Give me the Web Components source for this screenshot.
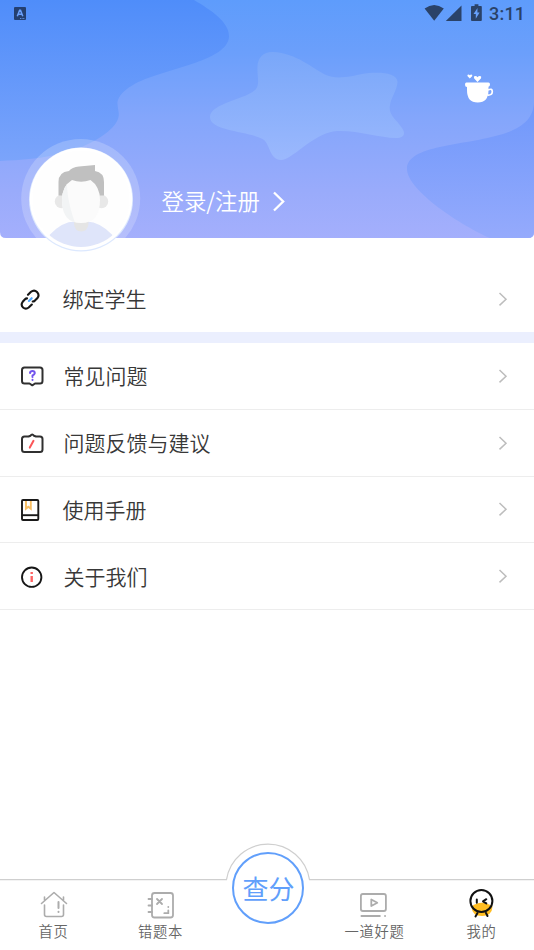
<!DOCTYPE html>
<html lang="zh-CN">
<head>
<meta charset="utf-8">
<meta name="viewport" content="width=device-width, initial-scale=1">
<title>我的</title>
<style>
  body {
    margin: 0;
    background: #fff;
    font-family: "Noto Sans CJK SC", sans-serif;
    font-weight: 350;
    overflow: hidden;
  }
</style>
</head>
<body>
<profile-page></profile-page>

<script>
class StatusBar extends HTMLElement {
  connectedCallback() {
    this.attachShadow({ mode: 'open' });
    this.shadowRoot.innerHTML = `
      <style>
        :host {
          display: flex;
          justify-content: space-between;
          height: 27px;
          color: #2a4268;
        }
        svg {
          display: block;
        }
        .right {
          display: flex;
        }
        .time {
          width: 45px;
          font: 500 18px/28px Roboto, sans-serif;
          letter-spacing: 0.2px;
        }
      </style>
      <svg width="40" height="27">
        <rect x="14" y="7" width="12" height="13" rx="1" fill="#243f70"/>
        <path d="M17.300 16.300l2.300-6h.9l2.300 6M18.300 14.200h3.600" fill="none" stroke="#6ba0fb" stroke-width="1.500"/>
        <path d="M20 18.500h5" stroke="#5f8ddf" stroke-width="1" stroke-dasharray="1 .6"/>
      </svg>
      <div class="right">
        <svg width="65" height="27" fill="currentColor">
          <path d="M.6 8.500Q10.200 1.500 19.800 8.500L10.200 20.700z"/>
          <path d="M37.500 5.500v15.500H21.800z"/>
          <path d="M48 6h2.600V4.300h3.800V6H57q.8 0 .8.800V20q0 1-.8 1h-9q-1 0-1-1V6.800Q47 6 48 6z"/>
          <path d="M53.500 8l-4 6h2.300v4.800l3.800-6.200h-2.200z" fill="#67a0fb"/>
        </svg>
        <span class="time">3:11</span>
      </div>
    `;
  }
}
customElements.define('status-bar', StatusBar);

class UserAvatar extends HTMLElement {
  connectedCallback() {
    this.attachShadow({ mode: 'open' });
    this.shadowRoot.innerHTML = `
      <style>
        :host {
          display: block;
          width: 120px;
          height: 116px;
        }
        svg {
          display: block;
          overflow: visible;
        }
      </style>
      <svg width="120" height="116" viewBox="21 138 120 116">
        <defs>
          <clipPath id="face"><circle cx="81" cy="199" r="48"/></clipPath>
          <clipPath id="half"><path d="M55 170h12.500q-3 25 8 54H55z"/></clipPath>
          <clipPath id="band"><path d="M21 135h120v103H21z"/></clipPath>
        </defs>
        <circle cx="80.700" cy="198.500" r="59.500" fill="#fff" fill-opacity=".2" clip-path="url(#band)"/>
        <circle cx="81" cy="199.500" r="52" fill="#dce8fe"/>
        <circle cx="81" cy="199" r="51.200" fill="#fff"/>
        <circle cx="81" cy="199" r="48.500" fill="#fefefe"/>
        <g clip-path="url(#face)">
          <path d="M49.500 235Q62 221.500 75 221.500h12Q100 222 112.500 235V250h-63z" fill="#dfe5fa"/>
          <path d="M74 218h14.500v6q-1 7.500-7.300 7.500T74 224z" fill="#e5e5e5"/>
        </g>
        <circle cx="61.500" cy="201.500" r="6.700" fill="#e8e8e8"/>
        <circle cx="101.500" cy="201.500" r="6.700" fill="#e8e8e8"/>
        <path d="M58.500 195.500V182q0-10 10.500-11 3-4 10-4.600L95 165v6q9 1.500 9 11v13.500z" fill="#c0c0c0"/>
        <path d="M72 180q9 3.500 18.500 0 9.500 6.500 9.500 20 0 23-19 23T62 200q0-14 10-20z" fill="#fbfbfb"/>
        <path d="M72 180q9 3.500 18.500 0 9.500 6.500 9.500 20 0 23-19 23T62 200q0-14 10-20z" fill="#f2f4f5" clip-path="url(#half)"/>
      </svg>
    `;
  }
}
customElements.define('user-avatar', UserAvatar);

class ProfileHeader extends HTMLElement {
  connectedCallback() {
    this.attachShadow({ mode: 'open' });
    this.shadowRoot.innerHTML = `
      <style>
        :host {
          display: block;
          position: relative;
          height: 238px;
          color: #fff;
        }
        .art {
          position: absolute;
          inset: 0;
          z-index: -1;
        }
        .tools {
          display: flex;
          justify-content: flex-end;
          padding: 45px 38px 0 0;
          height: 66px;
          box-sizing: content-box;
        }
        .user {
          display: flex;
          align-items: flex-start;
          padding-left: 21px;
        }
        .login {
          display: flex;
          align-items: center;
          margin: 45px 0 0 20.500px;
          gap: 12px;
          font-size: 22.400px;
          line-height: 34px;
        }
        .login svg {
          margin-top: 2px;
        }
      </style>
      <svg class="art" width="534" height="238" viewBox="0 0 534 238">
        <defs>
          <linearGradient id="sky" x2="0" y2="238" gradientUnits="userSpaceOnUse">
            <stop offset="0" stop-color="#5e9cfc"/>
            <stop offset=".22" stop-color="#6b9ffb"/>
            <stop offset=".5" stop-color="#84a6fb"/>
            <stop offset=".8" stop-color="#99abfb"/>
            <stop offset="1" stop-color="#a4affc"/>
          </linearGradient>
          <linearGradient id="wave" x2="0" y2="161" gradientUnits="userSpaceOnUse">
            <stop offset="0" stop-color="#4f8dfa"/>
            <stop offset="1" stop-color="#7ba4fb"/>
          </linearGradient>
          <linearGradient id="star" x2="0" y1="52" y2="160" gradientUnits="userSpaceOnUse">
            <stop offset="0" stop-color="#79a7f9"/>
            <stop offset="1" stop-color="#9bb8fd"/>
          </linearGradient>
          <linearGradient id="hill" x2="0" y1="103" y2="238" gradientUnits="userSpaceOnUse">
            <stop offset="0" stop-color="#6f98fb"/>
            <stop offset="1" stop-color="#95aafc"/>
          </linearGradient>
          <clipPath id="card"><path d="M0 0h534v232q0 6-6 6H6q-6 0-6-6z"/></clipPath>
        </defs>
        <g clip-path="url(#card)">
          <rect width="534" height="238" fill="url(#sky)"/>
          <path d="M0 0H194C211 10 229 22 229 36 229 62 160 69 133 85 121 92 117 99 117.500 104 118 112 121 115 116 123 108 135 88 146 67 152 42 159 20 160 0 161z" fill="url(#wave)"/>
          <path d="M534 103V238H490C464 227 407 191 407 169 407 145 463 146 503 134 524 127 533 118 534 103z" fill="url(#hill)"/>
          <path d="M272.500 52C263 52 258 58 257.500 66 257 76 260 84 256 89 248 99 210 103 210 117 210 132 252 131 264 140 270 145 270 160 281 160 292 160 312 135 333 131.500 354 129 378 138 396 138 404 138 406 134 402 128 396 119 388 115 390 105 391 98 397 90 397.500 82 397 71 374 72 362 74 353 76 336 80 326 75 313 69 297 53 272.500 52z" fill="url(#star)"/>
        </g>
      </svg>
      <status-bar></status-bar>
      <div class="tools">
        <svg width="32" height="34" viewBox="464 72 32 34">
          <path d="M466.500 82.500h22q1.500 0 1.500 2t-1.500 2.300V90q0 12.500-10.800 12.500T467 90v-3q-2 0-2-2.300t1.500-2.200z" fill="#fff"/>
          <path d="M488 90q4.300-2 4.300 1.500 0 4-5 3.500" fill="none" stroke="#fff" stroke-width="1.700"/>
          <path d="M477.500 82l-3.300-3.500q-1-2.400 1.200-2.400 1.300 0 2.100 1.100.9-1.100 2.200-1.100 2.200 0 1.200 2.400zM469.800 78.500l-2.200-2.200q-.8-1.900.8-1.900.9 0 1.400.8.500-.8 1.500-.8 1.600 0 .8 1.900z" fill="#fff"/>
        </svg>
      </div>
      <div class="user">
        <user-avatar></user-avatar>
        <div class="login">
          <span>登录/注册</span>
          <svg width="16" height="22" fill="none" stroke="#fff" stroke-width="2.300"><path d="M2 2.500l9.200 9L2 20.500"/></svg>
        </div>
      </div>
    `;
  }
}
customElements.define('profile-header', ProfileHeader);

class MenuRow extends HTMLElement {
  connectedCallback() {
    this.attachShadow({ mode: 'open' });
    this.shadowRoot.innerHTML = `
      <style>
        :host {
          display: flex;
          align-items: center;
          box-sizing: border-box;
          height: 66.800px;
          padding: 0 25px 0 20px;
          border-bottom: 1px solid #ededed;
          color: #383838;
          font-size: 21px;
          line-height: 30px;
        }
        .icon {
          display: flex;
          width: var(--label-gap, 43.500px);
          padding-top: 1px;
        }
        .label {
          flex: 1;
          padding-bottom: var(--label-lift, 2px);
        }
      </style>
      <span class="icon"><slot name="icon"></slot></span>
      <span class="label"><slot></slot></span>
      <svg width="11" height="16" fill="none" stroke="#bdbdbd" stroke-width="1.500"><path d="M1.500 2l6.500 6.200-6.500 6.200"/></svg>
    `;
  }
}
customElements.define('menu-row', MenuRow);

class TabItem extends HTMLElement {
  connectedCallback() {
    this.attachShadow({ mode: 'open' });
    this.shadowRoot.innerHTML = `
      <style>
        :host {
          display: flex;
          flex-direction: column;
          align-items: center;
          padding-top: 10px;
          color: #666;
          font-size: 14.300px;
          line-height: 20px;
          letter-spacing: 0.700px;
          white-space: nowrap;
        }
        .icon {
          display: flex;
          height: 32px;
        }
        ::slotted(svg) {
          overflow: visible;
        }
      </style>
      <span class="icon"><slot name="icon"></slot></span>
      <span><slot></slot></span>
    `;
  }
}
customElements.define('tab-item', TabItem);

class TabBar extends HTMLElement {
  connectedCallback() {
    this.attachShadow({ mode: 'open' });
    this.shadowRoot.innerHTML = `
      <style>
        :host {
          display: block;
          position: relative;
          height: 71px;
        }
        .line {
          position: absolute;
          left: 0;
          top: -36px;
        }
        .tabs {
          position: relative;
          display: grid;
          grid-template-columns: repeat(5, 107px);
        }
        .score {
          justify-self: center;
          box-sizing: border-box;
          width: 72px;
          height: 72px;
          margin-top: -27px;
          padding-left: 2px;
          border: 2px solid #619ffb;
          border-radius: 50%;
          color: #619ffb;
          font-size: 26px;
          line-height: 67px;
          font-weight: 400;
          text-align: center;
          white-space: nowrap;
        }
      </style>
      <svg class="line" width="534" height="38" fill="none" stroke="#cfcfcf" stroke-width="1.200">
        <path d="M0 36.700H226.500A42 42 0 0 1 309.500 36.700H534"/>
      </svg>
      <div class="tabs">
        <tab-item>
          <svg slot="icon" width="28" height="32" viewBox="40 889 28 32" fill="none" stroke="#acacac" stroke-width="1.600" stroke-linecap="round" stroke-linejoin="round">
            <path d="M41.500 903.500L54 892.500l12.500 11M44.500 901v-4M63.500 901v-4M44.500 905v9.500q0 2 2 2h15q2 0 2-2V905"/>
            <path d="M58.500 902v6M58.500 911.800v.2" stroke-width="2"/>
          </svg>首页</tab-item>
        <tab-item>
          <svg slot="icon" width="28" height="32" viewBox="147 889 28 32" fill="none" stroke="#acacac" stroke-width="1.800" stroke-linecap="round">
            <rect x="152" y="893" width="21" height="24.500" rx="2.500"/>
            <path d="M148.500 899h3.500M148.500 905.500h3.500M148.500 912h3.500M157 899l5 5M162 899l-5 5M168.300 906.800v.2M168.300 910.500v2.700h-4"/>
          </svg>错题本</tab-item>
        <div class="score">查分</div>
        <tab-item>
          <svg slot="icon" width="28" height="32" viewBox="362 889 28 32" fill="none" stroke="#acacac" stroke-width="1.800" stroke-linecap="round" stroke-linejoin="round">
            <rect x="361.900" y="894" width="25" height="17" rx="2"/>
            <path d="M372.300 899.500v6.500l6-3.200zM362.400 916h18.500M386 916h.1"/>
          </svg>一道好题</tab-item>
        <tab-item>
          <svg slot="icon" width="28" height="32" viewBox="468 889.500 28 32" fill="none" stroke="#111" stroke-width="2" stroke-linecap="round" stroke-linejoin="round">
            <path d="M471.500 907Q481.500 899.500 492.500 907q-.5 9.500-10.500 9.500T471.500 907z" fill="#ffbd22" stroke="none"/>
            <circle cx="481.400" cy="901.500" r="11"/>
            <path d="M476.800 900v3.200M486.300 899.700l-3.300 2.100 3.300 2.100M477.500 913.500l-2 3.500M486 913.500l1.500 3"/>
          </svg>我的</tab-item>
      </div>
    `;
  }
}
customElements.define('tab-bar', TabBar);

class ProfilePage extends HTMLElement {
  connectedCallback() {
    this.attachShadow({ mode: 'open' });
    this.shadowRoot.innerHTML = `
      <style>
        :host {
          display: flex;
          flex-direction: column;
          position: relative;
          z-index: 0;
          width: 534px;
          height: 950px;
        }
        .bind {
          --label-gap: 42.500px;
          height: 66px;
          margin-top: 28px;
          border-bottom: 0;
        }
        .manual {
          --label-gap: 42.500px;
          --label-lift: 0.500px;
        }
        .about {
          --label-lift: 0.500px;
        }
        .band {
          height: 11px;
          background: #ebeffe;
        }
        tab-bar {
          margin-top: auto;
        }
      </style>
      <profile-header></profile-header>
      <menu-row class="bind">
        <svg slot="icon" width="22" height="22" viewBox="20 289 22 22" fill="none" stroke="#161616" stroke-width="2.100" stroke-linecap="round">
          <path d="M28 294.800l3-3q3.200-2.600 6 .2t.5 6l-2.600 2.600q-1 .9-2.200.9M27 298.400q-1.200.1-2 .9l-2.300 2.500q-2.300 3 .4 5.700 2.700 2.300 5.600 0l3.100-3"/>
          <path d="M28.900 301l2.800-2.800" stroke="#50a9ff"/>
        </svg>绑定学生</menu-row>
      <div class="band"></div>
      <menu-row>
        <svg slot="icon" width="24" height="24" viewBox="20 364.500 24 24" fill="none" stroke="#303030" stroke-width="2" stroke-linecap="round" stroke-linejoin="round">
          <path d="M24.500 368h15.500q2.500 0 2.500 2.500v11q0 2.500-2.500 2.500h-5l-2.700 1.800-2.800-1.800h-5q-2.500 0-2.500-2.500v-11q0-2.500 2.500-2.500z"/>
          <path d="M30 373.500q.3-2 2.500-2t2.300 2.200q-.2 1.500-2.300 2.300v1.500M32.500 380.300v.2" stroke="#7355ed"/>
        </svg>常见问题</menu-row>
      <menu-row>
        <svg slot="icon" width="24" height="24" viewBox="20 431 24 24" fill="none" stroke="#303030" stroke-width="2" stroke-linecap="round" stroke-linejoin="round">
          <path d="M24.500 436.500h4l2-.8q1.700-2.300 3.400 0l2.100.8h4q2.500 0 2.500 2.500v10.500q0 2.500-2.500 2.500H24.500q-2.500 0-2.500-2.500V439q0-2.500 2.500-2.500z"/>
          <path d="M33.500 440.800l-3.700 6.800" stroke="#fb5658"/>
        </svg>问题反馈与建议</menu-row>
      <menu-row class="manual">
        <svg slot="icon" width="22" height="24" viewBox="20 498 22 24" fill="none" stroke="#191919" stroke-width="1.900">
          <path d="M26 500v8.700l2.300-2 2.500 2V500" stroke="#f8be63"/>
          <rect x="22" y="500" width="16.300" height="20" rx="1"/>
          <path d="M22 515.200h16.300"/>
        </svg>使用手册</menu-row>
      <menu-row class="about">
        <svg slot="icon" width="24" height="24" viewBox="20 565 24 24" fill="none" stroke="#161616" stroke-width="1.900">
          <circle cx="31.700" cy="577.200" r="9.700"/>
          <path d="M31.700 572v2M31.700 576v6" stroke="#ff6363" stroke-width="2.400"/>
        </svg>关于我们</menu-row>
      <tab-bar></tab-bar>
    `;
  }
}
customElements.define('profile-page', ProfilePage);
</script>
</body>
</html>
